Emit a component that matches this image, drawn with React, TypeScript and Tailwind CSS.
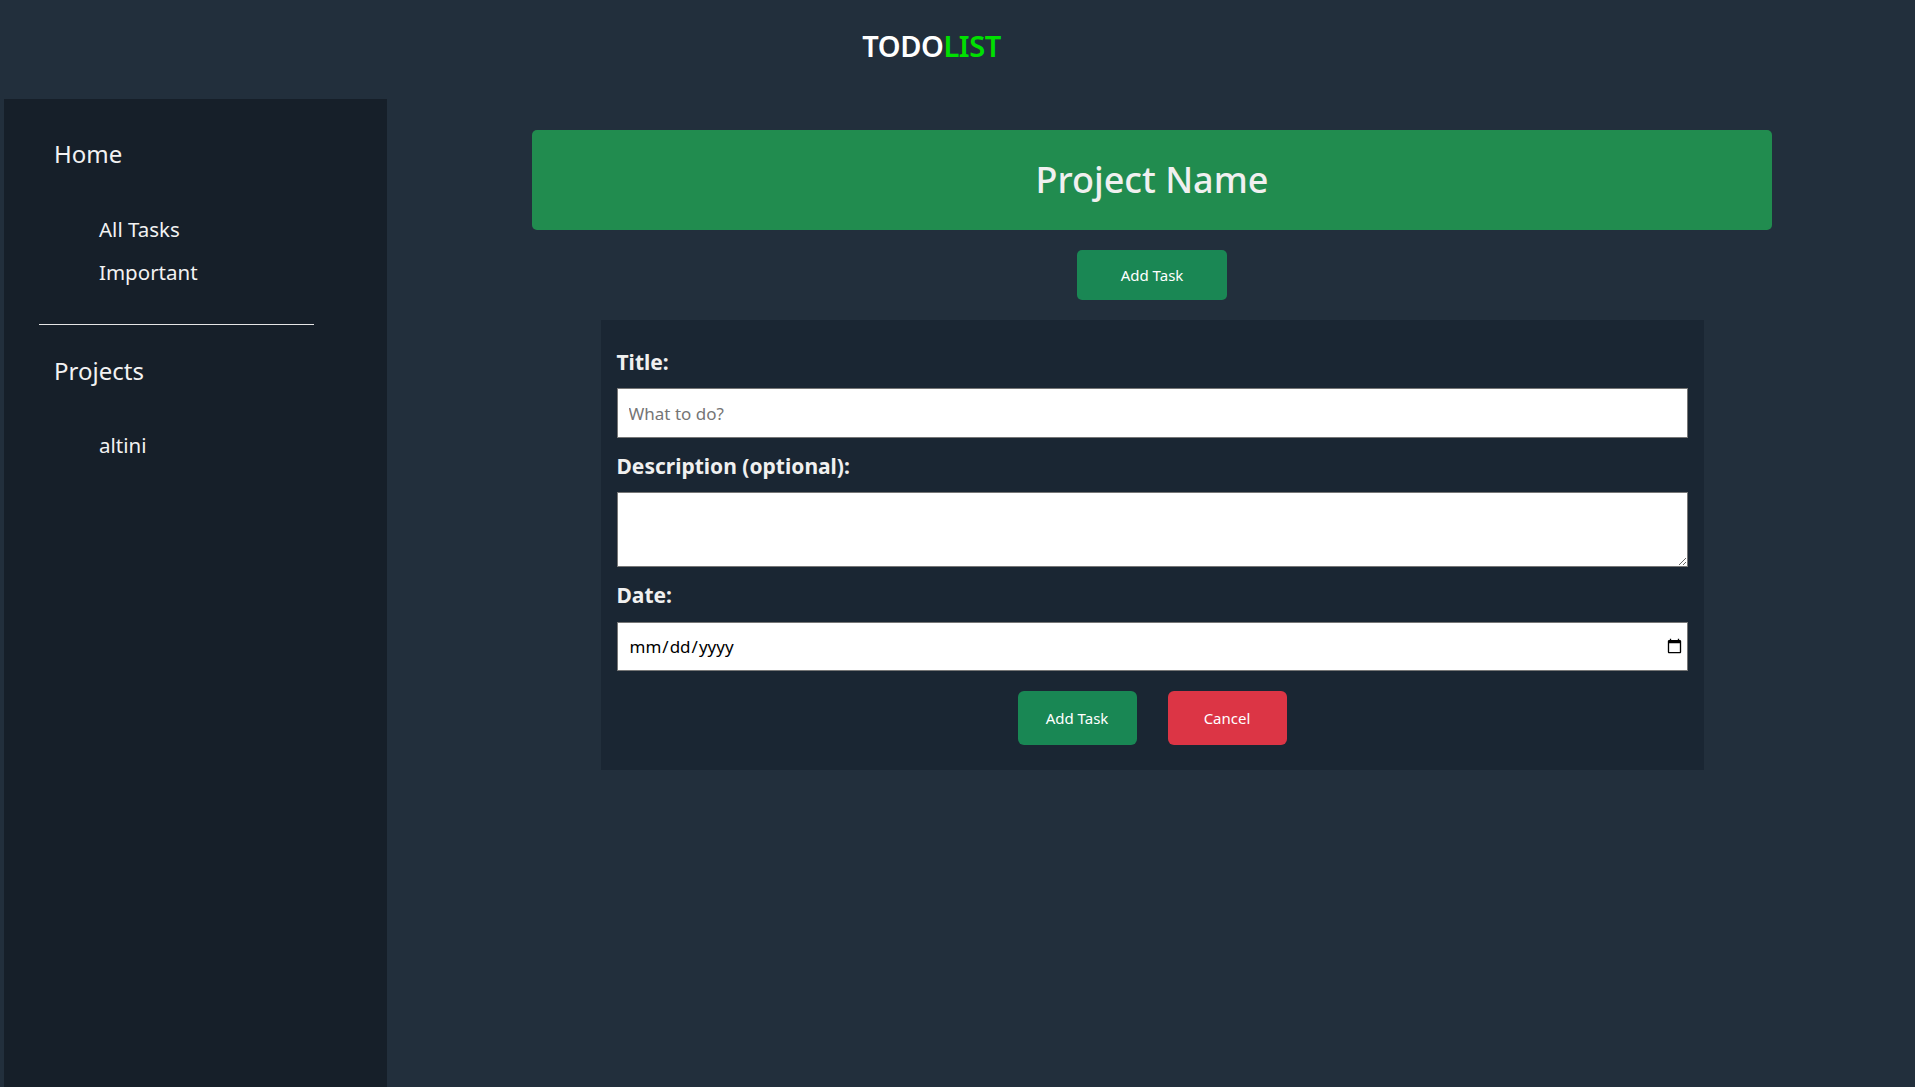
import React from "react";

export default function App() {
  const font = { fontFamily: '"Noto Sans", "Open Sans", sans-serif' };
  return (
    <div className="min-h-[1087px] w-full bg-[#222f3c] flex flex-col text-[#f2f2f2]" style={font}>
      <header className="h-[99px] flex justify-center pr-[52px] pt-[28px]">
        <h1 className="text-[29px] leading-[36px] font-semibold tracking-[-0.4px]">
          <span className="text-white">TODO</span>
          <span className="text-[#00e000]">LIST</span>
        </h1>
      </header>
      <div className="flex flex-1 pl-[4px]">
        <aside className="w-[383px] shrink-0 bg-[#161f29] min-h-[988px] pt-[39px]">
          <div className="pl-[50px] text-[24px] leading-[32px]">Home</div>
          <ul className="pl-[95px] mt-[38px] text-[20.5px] leading-[43px]">
            <li>All Tasks</li>
            <li>Important</li>
          </ul>
          <div className="ml-[35px] w-[275px] h-px bg-[#e5e5e5] mt-[30px]" />
          <div className="pl-[50px] mt-[30px] text-[24px] leading-[32px]">Projects</div>
          <ul className="pl-[95px] mt-[37px] text-[20.5px] leading-[43px]">
            <li>altini</li>
          </ul>
        </aside>
        <main className="flex-1 flex flex-col items-center pt-[31px] pl-[2px]">
          <div className="w-[1240px] h-[100px] rounded-[5px] bg-[#218c4f] flex items-center justify-center">
            <h2 className="text-[36px] font-medium text-[#f0f0f0]">Project Name</h2>
          </div>
          <button className="mt-[20px] w-[150px] h-[50px] rounded-[5px] bg-[#1a8754] text-[15px] text-white">
            Add Task
          </button>
          <form className="mt-[20px] w-[1103px] bg-[#1a2633] px-[16px] pt-[28px] pb-[25px] flex flex-col">
            <label className="text-[21px] leading-[28px] font-bold text-[#f0f0f0]">Title:</label>
            <input
              type="text"
              placeholder="What to do?"
              className="mt-[12px] h-[50px] w-full bg-white border border-[#767676] px-[11px] text-[17px] text-black placeholder:text-[#757575] outline-none"
            />
            <label className="mt-[14px] text-[21px] leading-[28px] font-bold text-[#f0f0f0]">
              Description (optional):
            </label>
            <textarea className="mt-[12px] h-[75px] w-full bg-white border border-[#767676] px-[11px] text-[17px] text-black outline-none" />
            <label className="mt-[14px] text-[21px] leading-[28px] font-bold text-[#f0f0f0]">Date:</label>
            <input
              type="date"
              className="mt-[13px] h-[49px] w-full bg-white border border-[#767676] pl-[11px] pr-[2px] text-[17px] text-black outline-none"
            />
            <div className="mt-[20px] flex justify-center gap-[31px]">
              <button type="button" className="w-[119px] h-[54px] rounded-[6px] bg-[#198754] text-[15px] text-white">
                Add Task
              </button>
              <button type="button" className="w-[119px] h-[54px] rounded-[6px] bg-[#dc3545] text-[15px] text-white">
                Cancel
              </button>
            </div>
          </form>
        </main>
      </div>
    </div>
  );
}
